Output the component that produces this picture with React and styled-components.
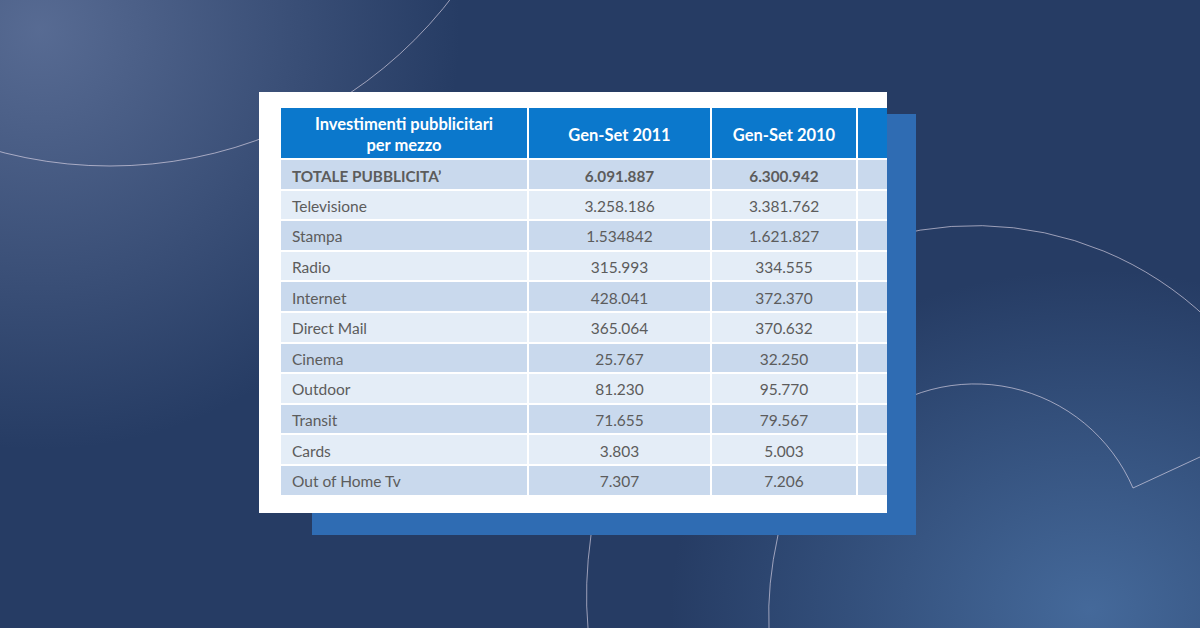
import React from 'react';
import styled, { createGlobalStyle } from 'styled-components';

const GlobalStyle = createGlobalStyle`
  html, body {
    margin: 0;
    padding: 0;
  }
  body {
    font-family: Lato, "Open Sans", sans-serif;
  }
`;

const Stage = styled.div`
  position: relative;
  width: 1200px;
  height: 628px;
  overflow: hidden;
  box-sizing: border-box;
  padding: 92px 0 0 259px;
  background:
    radial-gradient(circle at 40px 30px, rgba(96, 115, 155, 0.85) 0, rgba(96, 115, 155, 0) 420px),
    radial-gradient(ellipse 420px 340px at 1090px 610px, rgba(72, 110, 160, 0.9) 0, rgba(72, 110, 160, 0) 100%),
    #263c64;
`;

const Decor = styled.svg`
  position: absolute;
  inset: 0;
  z-index: 0;
`;

const Frame = styled.div`
  position: relative;
  z-index: 1;
  width: 657px;
  height: 443px;
`;

const Backing = styled.div`
  position: absolute;
  top: 22px;
  left: 53px;
  right: 0;
  bottom: 0;
  background: #2f6cb3;
`;

const Card = styled.div`
  position: relative;
  width: 628px;
  height: 421px;
  background: #ffffff;
  overflow: hidden;
  box-sizing: border-box;
  padding: 16px 0 0 22px;
`;

const Grid = styled.div`
  display: grid;
  grid-template-columns: 246px 181px 144px 120px;
  grid-template-rows: 50px;
  grid-auto-rows: 28.6px;
  gap: 2px;
  width: 697px;
  background: #ffffff;
`;

const HeadCell = styled.div`
  display: flex;
  align-items: center;
  justify-content: center;
  text-align: center;
  background: #0b78cc;
  color: #ffffff;
  font-weight: 700;
  font-size: 16.5px;
  line-height: 21px;
  padding-top: 4px;
  box-sizing: border-box;
`;

const Cell = styled.div`
  display: flex;
  align-items: center;
  justify-content: ${p => (p.$label ? 'flex-start' : 'center')};
  padding-left: ${p => (p.$label ? '11px' : '0')};
  padding-top: ${p => (p.$bold ? '4px' : '2px')};
  background: ${p => (p.$dark ? '#c9d9ed' : '#e4edf7')};
  color: #5c5c5c;
  font-size: ${p => (p.$bold ? '15.3px' : '15.5px')};
  font-weight: ${p => (p.$bold ? 700 : 400)};
`;

const rows = [
  ['TOTALE PUBBLICITA’', '6.091.887', '6.300.942'],
  ['Televisione', '3.258.186', '3.381.762'],
  ['Stampa', '1.534842', '1.621.827'],
  ['Radio', '315.993', '334.555'],
  ['Internet', '428.041', '372.370'],
  ['Direct Mail', '365.064', '370.632'],
  ['Cinema', '25.767', '32.250'],
  ['Outdoor', '81.230', '95.770'],
  ['Transit', '71.655', '79.567'],
  ['Cards', '3.803', '5.003'],
  ['Out of Home Tv', '7.307', '7.206'],
];

export default function App() {
  return (
    <>
      <GlobalStyle />
      <Stage>
        <Decor width="1200" height="628" viewBox="0 0 1200 628" fill="none">
          <g stroke="rgba(235,225,240,0.6)" strokeWidth="1">
            <circle cx="110" cy="-265" r="431" />
            <path d="M 860 246 A 336 336 0 0 1 1280 420 L 1133 488 A 172 172 0 0 0 860 428" />
            <path d="M 591 535 Q 584 585 588 628" />
            <path d="M 778 535 Q 767 585 769 628" />
          </g>
        </Decor>
        <Frame>
          <Backing />
          <Card>
            <Grid>
              <HeadCell>Investimenti pubblicitari<br />per mezzo</HeadCell>
              <HeadCell>Gen-Set 2011</HeadCell>
              <HeadCell>Gen-Set 2010</HeadCell>
              <HeadCell />
              {rows.map(([label, a, b], i) => {
                const dark = i % 2 === 0;
                const bold = i === 0;
                return (
                  <React.Fragment key={label}>
                    <Cell $label $dark={dark} $bold={bold}>{label}</Cell>
                    <Cell $dark={dark} $bold={bold}>{a}</Cell>
                    <Cell $dark={dark} $bold={bold}>{b}</Cell>
                    <Cell $dark={dark} />
                  </React.Fragment>
                );
              })}
            </Grid>
          </Card>
        </Frame>
      </Stage>
    </>
  );
}
